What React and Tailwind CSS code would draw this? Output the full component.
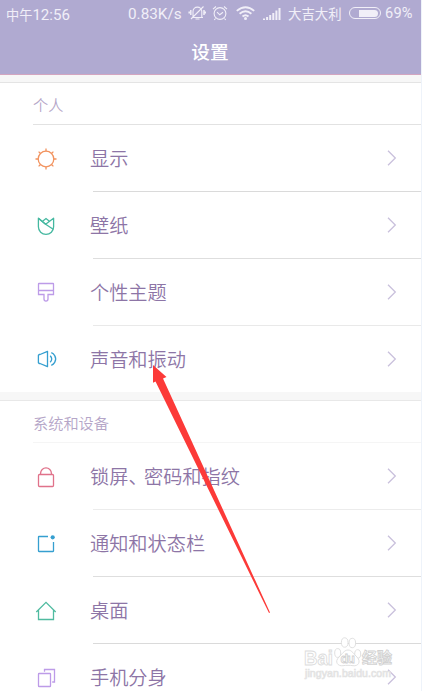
import React from 'react';

const iconProps = { width: 24, height: 24, viewBox: '0 0 24 24', fill: 'none', strokeWidth: 1.3 };

const SunIcon = () => (
  <svg {...iconProps} stroke="#f2935f" className="mt-[2px] shrink-0">
    <circle cx="12" cy="12" r="7.8" />
    <path d="M12 1.5v2.7M12 19.8v2.7M1.5 12h2.7M19.8 12h2.7M4.6 4.6l1.9 1.9M17.5 17.5l1.9 1.9M4.6 19.4l1.9-1.9M17.5 6.500l1.9-1.9" />
  </svg>
);

const TulipIcon = () => (
  <svg {...iconProps} stroke="#45b8a0" className="mt-[2px] shrink-0">
    <path d="M4.4 4.2v8.6a7.6 7.6 0 0 0 15.2 0V4.2L11.6 10.2z" strokeLinejoin="round" />
    <path d="M4.4 4.2l7.2 6M8.6 7.3L12 4.5l3.4 2.8M11.6 10.2l7.6 5" />
  </svg>
);

const BrushIcon = () => (
  <svg {...iconProps} stroke="#bd9be8" className="shrink-0">
    <path d="M5 3.500h14q.5 0 .5.5v10.500H14v4.600a2 2 0 0 1-4 0v-4.600H4.500V4Q4.500 3.500 5 3.500zM4.500 10.500h15" />
  </svg>
);

const SpeakerIcon = () => (
  <svg {...iconProps} stroke="#359fd0" className="shrink-0">
    <path d="M13.5 4.3v15.4L6 16.5H5.2L4.4 15.7V8.3L5.2 7.5H6z" strokeLinejoin="round" />
    <path d="M16.2 8.7q3 3.3 0 6.6M17.3 5.7q2.2.9 3.4 2.9 2 3.4 0 6.8-1.2 2-3.4 2.9" />
  </svg>
);

const LockIcon = () => (
  <svg {...iconProps} stroke="#e0728a" className="mt-[2px] shrink-0">
    <rect x="4.5" y="9.5" width="15" height="12" rx="1" />
    <path d="M6.6 9.5V8.300a5.400 5.400 0 0 1 10.800 0v1.200" />
  </svg>
);

const NoticeIcon = () => (
  <svg {...iconProps} stroke="#359fd0" className="mt-[2px] shrink-0">
    <path d="M14 4.5H5q-.5 0-.5.5v14q0 .5.5.5h14q.5 0 .5-.5v-9" />
    <circle cx="18.7" cy="5.3" r="2.1" fill="#359fd0" stroke="none" />
  </svg>
);

const HomeIcon = () => (
  <svg {...iconProps} stroke="#50bba0" className="mt-[2px] shrink-0">
    <path d="M2.3 13L12 3.3 21.7 13M4.5 11v9.500h15V11" />
  </svg>
);

const CloneIcon = () => (
  <svg {...iconProps} stroke="#bd9be8" className="mt-[2px] shrink-0">
    <rect x="4.5" y="7.5" width="12" height="13" rx=".6" />
    <path d="M10.5 5.8V3.5h10v12.500h-2.3" />
  </svg>
);

const sections = [
  {
    title: '个人',
    line: 'border-[#e2e2e2]',
    items: [
      { label: '显示', icon: <SunIcon />, line: 'border-[#dadada]' },
      { label: '壁纸', icon: <TulipIcon />, line: 'border-[#dedede]' },
      { label: '个性主题', icon: <BrushIcon />, line: 'border-[#e9e9e9]' },
      { label: '声音和振动', icon: <SpeakerIcon /> },
    ],
  },
  {
    title: '系统和设备',
    line: 'border-[#f5f5f5]',
    items: [
      { label: <>锁屏<span className="tracking-[-3.6px]">、</span>密码和指纹</>, icon: <LockIcon />, line: 'border-[#ececec]' },
      { label: '通知和状态栏', icon: <NoticeIcon />, line: 'border-[#dedede]' },
      { label: '桌面', icon: <HomeIcon />, line: 'border-[#dadada]' },
      { label: '手机分身', icon: <CloneIcon /> },
    ],
  },
];

const StatusBar = () => (
  <div className="flex h-[28px] items-center pl-[6px] pr-[7px] text-[#f1eff8]">
    <span className="mb-px w-[122px] shrink-0 leading-[20px]">
      <span className="text-[13.2px]">中午</span><span className="font-[Roboto,sans-serif] text-[15.1px]">12:56</span>
    </span>
    <span className="w-[60px] shrink-0 font-[Roboto,sans-serif] text-[15.3px]">0.83K/s</span>
    <svg width="18" height="16" viewBox="0 0 18 16" fill="none" stroke="currentColor" strokeWidth="1.1" className="mb-[2px] shrink-0">
      <path d="M4 12.5h11M5 12V6.5a4.4 4.4 0 0 1 8.8 0V12M7.5 14h4M3 14L15.5 1.5" />
      <path d="M2.8 5v5M1.2 6.5v2M16 5v5M17.4 6.5v2" strokeWidth="1.5" />
    </svg>
    <svg width="16" height="16" viewBox="0 0 16 16" fill="none" stroke="currentColor" strokeWidth="1.1" className="mb-[2px] ml-[6px] shrink-0">
      <circle cx="8" cy="8.5" r="5.9" />
      <path d="M5 7.2l2.8 2.6L11 7.2M1 4.2L4 1.5M15 4.2l-3-2.7M3.5 13.5L2.3 15M12.5 13.5l1.2 1.5" />
    </svg>
    <svg width="19" height="14" viewBox="0 0 19 14" fill="none" stroke="currentColor" strokeWidth="1.9" className="mb-[2px] ml-[8px] shrink-0">
      <path d="M.8 4.9Q9.5-2.5 18.2 4.9M3.6 7.8q5.9-5 11.8 0M6.5 10.6q3-2.5 6 0" />
      <circle cx="9.5" cy="12.4" r="1.5" fill="currentColor" stroke="none" />
    </svg>
    <svg width="18" height="12" viewBox="0 0 18 12" fill="currentColor" className="mb-px ml-[8px] shrink-0">
      <path d="M0 10.5h2V12H0zM3.1 9h2v3h-2zM6.2 7h2v5h-2zM9.3 5h2v7h-2zM12.4 2.5h2V12h-2zM15.5 0h2v12h-2z" />
    </svg>
    <span className="mb-[2px] ml-[7px] w-[61px] shrink-0 text-[13.4px]">大吉大利</span>
    <span className="mb-[2px] flex h-[12px] w-[32px] shrink-0 items-center justify-end rounded-full border border-[#f1eff8] p-[2px]">
      <span className="h-[7px] w-[19px] rounded-r-full bg-[#f1eff8]" />
    </span>
    <span className="ml-[4px] font-[Roboto,sans-serif] text-[14.6px] tracking-[0.2px]">69%</span>
  </div>
);

const Row = ({ item }) => (
  <div className="flex h-[66px] shrink-0 items-center pl-[34px]">
    {item.icon}
    <span className="ml-[32px] flex-1 text-[19.2px] font-[350] text-[#8d75a6]">{item.label}</span>
    <svg width="10" height="16" viewBox="0 0 10 16" fill="none" stroke="#c9c0dc" strokeWidth="1.3" className="mr-[24px]">
      <path d="M1 .8L8.3 8 1 15.2" />
    </svg>
  </div>
);

const Section = ({ section }) => (
  <section>
    <h2 className={`ml-[33px] flex h-[42px] items-center border-b pt-px text-[15.2px] font-[350] text-[#b5a6c8] ${section.line}`}>{section.title}</h2>
    {section.items.map((item, i) => (
      <React.Fragment key={i}>
        <Row item={item} />
        {item.line && <div className={`ml-[93px] border-b ${item.line}`} />}
      </React.Fragment>
    ))}
  </section>
);

const Arrow = () => (
  <svg width="120" height="252" viewBox="0 0 120 252" className="pointer-events-none absolute left-[152px] top-[364px]">
    <path d="M1 1L14.5 13 11 14.5 118 248.5 117 249 3.5 17.5 1 18.8z" fill="#fc3a38" />
  </svg>
);

const Watermark = () => (
  <svg width="96" height="48" viewBox="0 0 96 48" className="pointer-events-none absolute left-[302px] top-[635px]" fill="#fff" stroke="#dcdcdc" strokeWidth="0.9">
    <text x="2" y="30" fontFamily="Liberation Sans, sans-serif" fontSize="20" fontWeight="bold" textLength="29" lengthAdjust="spacingAndGlyphs">Bai</text>
    <ellipse cx="35.7" cy="18" rx="3" ry="4.4" />
    <ellipse cx="42.7" cy="7.500" rx="3.3" ry="4.700" />
    <ellipse cx="50.3" cy="8" rx="3.300" ry="4.700" />
    <ellipse cx="55.700" cy="19" rx="3" ry="4.300" />
    <path d="M46 15c-4 0-6 4.500-9 7-5 5-1 9.500 4 8.700 3-.5 7-.5 10 0 5 .8 8.500-3.700 4-8.700-3-2.500-5-7-9-7z" />
    <text x="38.500" y="28" fontFamily="Liberation Sans, sans-serif" fontSize="12.500" fontWeight="bold" strokeWidth="0.800" stroke="#cfcfcf" textLength="14.500">du</text>
    <text x="60" y="28" fontFamily="Noto Sans CJK SC, sans-serif" fontSize="15" fontWeight="bold" stroke="#d2d2d2">经验</text>
    <text x="3" y="41.500" fontFamily="Liberation Sans, sans-serif" fontSize="10.500" textLength="86" strokeWidth="0.700" stroke="#e2e2e2" fill="#f4f4f4">jingyan.baidu.com</text>
  </svg>
);

export default function App() {
  return (
    <div className="relative flex h-[691px] w-[422px] flex-col overflow-hidden border-r border-[#eef3fa] bg-white font-['Noto_Sans_CJK_SC',sans-serif]">
      <header className="h-[75px] shrink-0 border-b border-[#d3a5c0] bg-[#b0aad1]">
        <StatusBar />
        <h1 className="flex h-[46px] items-center justify-center pr-px text-[18.7px] font-medium text-white">设置</h1>
      </header>
      <div className="h-[8px] shrink-0 border-b border-[#e4e4e4] bg-[#f7f7f7]" />
      <Section section={sections[0]} />
      <div className="h-[9px] shrink-0 border-b border-[#e8e8e8] bg-[#f7f7f7]" />
      <Section section={sections[1]} />
      <Watermark />
      <Arrow />
    </div>
  );
}
